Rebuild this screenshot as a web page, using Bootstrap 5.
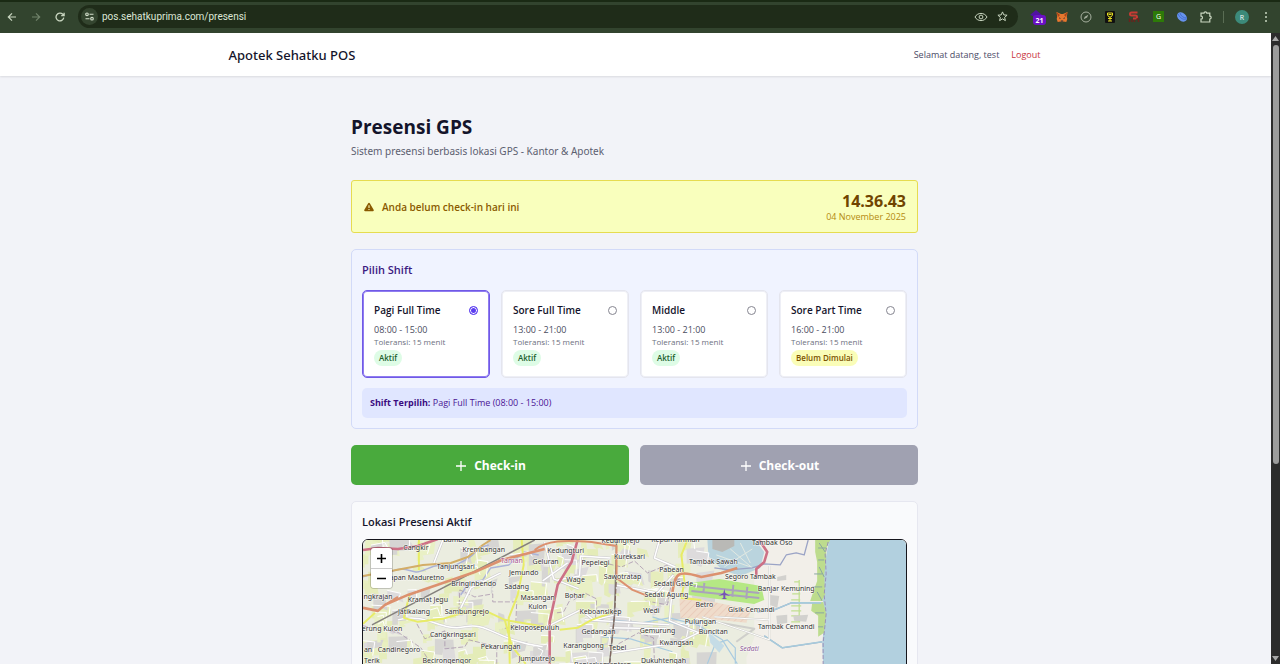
<!DOCTYPE html>
<html lang="id">
<head>
<meta charset="utf-8">
<meta name="viewport" content="width=device-width, initial-scale=1">
<title>Apotek Sehatku POS</title>
<link href="https://cdn.jsdelivr.net/npm/bootstrap@5.3.0/dist/css/bootstrap.min.css" rel="stylesheet">
<style>
  body { font-family: "Open Sans", "Noto Sans", sans-serif; font-size: 9px; line-height: 12px; background: #f2f3f8; color: #14142b; }
  h1, h2, h3, p { margin: 0; }
  .browser-bar { height: 33px; background: #32442e; box-shadow: inset 0 2px #1a2a14; color: #c9d6c0; padding-right: 2px; }
  .browser-bar button { border: 0; background: none; padding: 0; color: inherit; display: flex; width: 24px; height: 24px; align-items: center; justify-content: center; }
  .address { height: 23px; background: #1f2c19; border-radius: 12px; padding: 0 4px 0 3px; margin-left: 6px; }
  .address .site-info { width: 17px; height: 17px; border-radius: 50%; background: #34452f; }
  .address input { background: none; border: 0; outline: 0; padding: 0; color: #dde6d6; font-family: Roboto, sans-serif; font-size: 10px; min-width: 0; }
  .address .eye { width: 18px; }
  .extensions { margin-left: 8px; }
  .page-view { min-height: 0; }
  .page-body { padding-right: 2px; }
  .topbar { background: #fff; box-shadow: 0 1px 2px #0000001a; height: 43px; margin-right: -2px; padding-right: 2px; }
  .topbar-inner { max-width: 812px; }
  .brand { font-family: "Noto Sans", sans-serif; font-size: 13px; line-height: 20px; font-weight: 500; color: #14142b; }
  .welcome { color: #4b4b66; }
  .logout { color: #c8323c; text-decoration: none; }
  .content-col { max-width: 567px; padding-top: 39px; }
  .title { font-size: 19px; line-height: 24px; font-weight: 700; }
  .subtitle { font-family: "Noto Sans", sans-serif; font-size: 10px; line-height: 14px; color: #5c6070; margin-top: 5px; }
  .notice { background: #f9ffbd; border: 1px solid #e6dc50; border-radius: 3px; height: 53px; padding: 0 11px 0 12px; margin-top: 22px; color: #8a5a00; }
  .notice strong { font-size: 10px; font-weight: 600; }
  .clock { font-size: 16px; line-height: 20px; font-weight: 700; color: #704400; }
  .date { color: #b48a10; }
  .shift-panel { background: #f0f3ff; border: 1px solid #d2daf8; border-radius: 5px; padding: 10px; margin-top: 16px; height: 180px; }
  .panel-title { font-size: 11px; line-height: 20px; font-weight: 600; }
  .shift-panel .panel-title { color: #3b1a82; }
  .shift-grid { display: grid; grid-template-columns: repeat(4, 1fr); gap: 11px; margin-top: 10px; }
  .shift { background: #fff; border: 1px solid #e4e5ee; box-shadow: 0 0 0 1px #eeeff6 inset; border-radius: 5px; height: 88px; padding: 12px 10px 0 11px; cursor: pointer; }
  .shift.chosen { border-color: #7059e6; box-shadow: 0 0 0 1px #8f7cf0 inset; }
  .shift-name { font-size: 10px; line-height: 14px; font-weight: 600; }
  .shift input { appearance: none; width: 9px; height: 9px; border: 1px solid #858590; border-radius: 50%; margin: 3px 1px 0 0; background: #fff; }
  .shift input:checked { border-color: #5b3df0; background: #5b3df0; box-shadow: 0 0 0 1px #fff inset; }
  .hours { color: #4a4c60; margin-top: 7px; }
  .tolerance { font-size: 8px; color: #6c7080; }
  .pill { font-size: 8px; line-height: 12px; font-weight: 600; padding: 2px 5px; border-radius: 8px; background: #defce6; color: #20602c; margin-top: 2px; display: inline-block; }
  .pill.waiting { background: #fafdb8; color: #7a5200; }
  .chosen-line { background: #e0e6ff; border-radius: 5px; height: 30px; padding: 0 8px; margin-top: 10px; color: #4a1494; }
  .chosen-line b { color: #3a0c80; }
  .actions { display: grid; grid-template-columns: 1fr 1fr; gap: 11px; margin-top: 16px; }
  .actions .btn { height: 40px; border: 0; border-radius: 5px; font-size: 12px; font-weight: 700; color: #fff; padding: 2px 0 0 2px; background: #49aa3d; opacity: 1; }
  .actions .btn:disabled { background: #a0a1b1; }
  .map-panel { background: #f9fafc; border: 1px solid #e6e7f0; border-radius: 5px; padding: 10px; margin-top: 16px; }
  .map-box { border: 1px solid #15151c; border-radius: 6px; overflow: hidden; margin-top: 7px; height: 268px; position: relative; }
  .map-box > svg { width: 100%; height: 100%; display: block; font-family: "Noto Sans", sans-serif; }
  .zoom-ctl { position: absolute; left: 8px; top: 8px; width: 21px; border-radius: 3px; box-shadow: 0 0 0 1px #0000002e; overflow: hidden; }
  .zoom-ctl button { display: block; width: 100%; height: 20px; padding: 0; border: 0; background: #fff; color: #000; }
  .zoom-ctl button + button { border-top: 1px solid #ccc; }
  .zoom-ctl svg { display: block; margin: auto; }
  .scroll-rail { width: 9px; background: #2c2c2c; padding: 3px 1px; }
  .scroll-thumb { width: 6px; height: 67%; border-radius: 3px; background: #9c9c9c; margin-top: 3px; }
</style>
</head>
<body>
<div class="vh-100 d-flex flex-column overflow-hidden">
  <header class="browser-bar d-flex align-items-center flex-shrink-0">
    <button aria-label="Kembali"><svg width="10" height="10" viewBox="0 0 10 10" fill="none" stroke="currentColor" stroke-width="1.2"><path d="M9 5H1.5M5 1.3 1.3 5 5 8.7"/></svg></button>
    <button aria-label="Maju"><svg width="10" height="10" viewBox="0 0 10 10" fill="none" stroke="#70836a" stroke-width="1.2"><path d="M1 5h7.5M5 1.3 8.7 5 5 8.7"/></svg></button>
    <button aria-label="Muat ulang"><svg width="10" height="10" viewBox="0 0 10 10" fill="none" stroke="currentColor" stroke-width="1.3"><path d="M8.8 5.7A3.9 3.9 0 1 1 7.8 2.3L9 3.5M9.1.7v3H6.2"/></svg></button>
    <div class="address d-flex align-items-center flex-grow-1">
      <span class="site-info d-flex align-items-center justify-content-center"><svg width="9" height="9" viewBox="0 0 9 9" fill="none" stroke="#d3decb" stroke-width="1.1"><circle cx="2" cy="2.3" r="1.3"/><path d="M4.5 2.3H8.5M.5 6.7H4.5"/><circle cx="7" cy="6.7" r="1.3"/></svg></span>
      <input class="flex-grow-1 ms-1" type="text" aria-label="Alamat" value="pos.sehatkuprima.com/presensi">
      <button class="eye" aria-label="Lihat"><svg width="14" height="10" viewBox="-1 0 14 10" fill="none" stroke="currentColor"><path d="M0 5C2.500.2 9.500.2 12 5 9.500 9.800 2.500 9.800 0 5z"/><circle cx="6" cy="5" r="1.900"/></svg></button>
      <button aria-label="Tandai"><svg width="11" height="11" viewBox="0 0 11 11" fill="none" stroke="currentColor"><path d="m5.500.9 1.300 3 3.300.3-2.500 2.200.8 3.200-2.900-1.700-2.900 1.700.8-3.200L.9 4.200l3.300-.3z"/></svg></button>
    </div>
    <div class="extensions d-flex align-items-center">
      <button aria-label="Ekstensi 21"><svg width="18" height="18" viewBox="0 0 18 18"><path d="M1 7 7 2l6 5-2 1v4H4V8z" fill="#5012a0"/><rect x="4" y="7" width="13" height="10" rx="3" fill="#6a10c4"/><text x="10.500" y="15" font-size="7" font-weight="700" fill="#fff" text-anchor="middle">21</text></svg></button>
      <button aria-label="Rubah"><svg width="12" height="12" viewBox="0 0 12 12"><path d="M.5 1 5 3h2l4.500-2-.7 5 .5 2-1 3-2.800-.6L6 11.300l-1.500-.9-2.800.6-1-3 .5-2z" fill="#e8772e"/><path d="m.5 1 3.500 3-2 2zM11.500 1 8 4l2 2z" fill="#a8451a"/><path d="M3 6.300 5 7.500l-1.500.3zM9 6.300 7 7.500l1.500.3zM4.700 9.500h2.600l-.5 1.200H5.200z" fill="#27303a"/></svg></button>
      <button aria-label="Kompas"><svg width="12" height="12" viewBox="0 0 12 12" fill="none" stroke="#a6b09f"><circle cx="6" cy="6" r="5"/><path d="m3.700 8.300 1-2.500 3.600-2.100-1.200 2.800z" fill="#a6b09f" stroke="none"/></svg></button>
      <button aria-label="Robot"><svg width="10" height="12" viewBox="0 0 10 12"><rect width="10" height="12" rx="1" fill="#111"/><path d="M2.500 2h5v2l-1.500 2h-2L2.500 4zM5 6v4M3 7.500h4M3 10h4" fill="none" stroke="#e4dd21"/><path d="M3.500 3.500h3" stroke="#e4dd21"/></svg></button>
      <button aria-label="SEO"><svg width="12" height="12" viewBox="0 0 12 12"><path d="M9.500 1.500H3.500a1.500 1.500 0 0 0 0 3h4a1.500 1.500 0 0 1 0 3H5" fill="none" stroke="#c83b34" stroke-width="2"/><path d="M1.500 7.500v3.500m2.500-3v3m2.500-2v2m2-3h2v3" fill="none" stroke="#6a211c" stroke-width="1.400"/></svg></button>
      <button aria-label="G"><svg width="11" height="11" viewBox="0 0 11 11"><rect width="11" height="11" fill="#2d7a08"/><text x="5.500" y="8" font-size="7" fill="#fff" text-anchor="middle">G</text></svg></button>
      <button aria-label="Bola"><svg width="12" height="12" viewBox="0 0 12 12"><ellipse cx="6" cy="6" rx="5.500" ry="4" transform="rotate(40 6 6)" fill="#6793ec"/><path d="M2 3c2 4 5 6 8 5M4 2c1 3 3 5 7 5" fill="none" stroke="#3b64c8" stroke-width=".8"/></svg></button>
      <button aria-label="Semua ekstensi"><svg width="12" height="12" viewBox="0 0 12 12" fill="none" stroke="currentColor" stroke-width="1.200"><path d="M1 2.200h3a1.400 1.400 0 0 1 2.800 0h3v3a1.400 1.400 0 0 1 0 2.800v3H1V8.200a1.500 1.500 0 0 0 0-3z"/></svg></button>
      <svg class="mx-1" width="4" height="12"><path d="M1.500 0v12" stroke="#5a6d54"/></svg>
      <button aria-label="Profil R"><svg width="14" height="14" viewBox="0 0 14 14"><circle cx="7" cy="7" r="7" fill="#3c8a7a"/><text x="7" y="9.500" font-size="7" fill="#fff" text-anchor="middle">R</text></svg></button>
      <button aria-label="Menu"><svg width="4" height="12" fill="currentColor"><circle cx="2" cy="2" r="1"/><circle cx="2" cy="6" r="1"/><circle cx="2" cy="10" r="1"/></svg></button>
    </div>
  </header>

  <div class="page-view d-flex flex-grow-1">
    <div class="page-body flex-grow-1 overflow-hidden">
      <nav class="topbar">
        <div class="topbar-inner mx-auto h-100 d-flex align-items-center justify-content-between">
          <span class="brand">Apotek Sehatku POS</span>
          <div class="d-flex align-items-center"><span class="welcome me-2 pe-1">Selamat datang, test</span><a class="logout" href="#">Logout</a></div>
        </div>
      </nav>
      <main class="content-col mx-auto">
        <h1 class="title">Presensi GPS</h1>
        <p class="subtitle">Sistem presensi berbasis lokasi GPS - Kantor &amp; Apotek</p>

        <section class="notice d-flex align-items-center justify-content-between">
          <div class="d-flex align-items-center gap-1">
            <svg class="me-1" width="10" height="10" viewBox="0 0 11 10"><path d="M4.600.9a1 1 0 0 1 1.800 0l4.200 7.200A1 1 0 0 1 9.700 9.700H1.300A1 1 0 0 1 .4 8.100z" fill="#8a5a00"/><path d="M5.500 3v3M5.500 7.200v1.200" stroke="#f9ffbd" stroke-width="1.200"/></svg>
            <strong>Anda belum check-in hari ini</strong>
          </div>
          <div class="text-end"><div class="clock">14.36.43</div><div class="date">04 November 2025</div></div>
        </section>

        <section class="shift-panel">
          <h2 class="panel-title">Pilih Shift</h2>
          <div class="shift-grid">
            <label class="shift chosen"><span class="d-flex justify-content-between"><span class="shift-name">Pagi Full Time</span><input type="radio" name="shift" checked></span><span class="hours d-block">08:00 - 15:00</span><span class="tolerance d-block">Toleransi: 15 menit</span><span class="pill">Aktif</span></label>
            <label class="shift"><span class="d-flex justify-content-between"><span class="shift-name">Sore Full Time</span><input type="radio" name="shift"></span><span class="hours d-block">13:00 - 21:00</span><span class="tolerance d-block">Toleransi: 15 menit</span><span class="pill">Aktif</span></label>
            <label class="shift"><span class="d-flex justify-content-between"><span class="shift-name">Middle</span><input type="radio" name="shift"></span><span class="hours d-block">13:00 - 21:00</span><span class="tolerance d-block">Toleransi: 15 menit</span><span class="pill">Aktif</span></label>
            <label class="shift"><span class="d-flex justify-content-between"><span class="shift-name">Sore Part Time</span><input type="radio" name="shift"></span><span class="hours d-block">16:00 - 21:00</span><span class="tolerance d-block">Toleransi: 15 menit</span><span class="pill waiting">Belum Dimulai</span></label>
          </div>
          <div class="chosen-line d-flex align-items-center"><span><b>Shift Terpilih:</b> Pagi Full Time (08:00 - 15:00)</span></div>
        </section>

        <div class="actions">
          <button class="btn d-flex align-items-center justify-content-center gap-2"><svg width="10" height="10" stroke="#fff" stroke-width="1.300"><path d="M5 0v10M0 5h10"/></svg>Check-in</button>
          <button class="btn d-flex align-items-center justify-content-center gap-2" disabled><svg width="10" height="10" stroke="#fff" stroke-width="1.300"><path d="M5 0v10M0 5h10"/></svg>Check-out</button>
        </div>

        <section class="map-panel">
          <h2 class="panel-title">Lokasi Presensi Aktif</h2>
          <div class="map-box">
            <svg viewBox="0 0 544 268" preserveAspectRatio="xMinYMin slice" fill="none" stroke-linejoin="round">
              <defs>
                <pattern id="hatch" width="5" height="5" patternUnits="userSpaceOnUse" patternTransform="rotate(45)"><rect width="5" height="5" fill="#efdccb"/><path d="M0 0v5" stroke="#e6bfae"/></pattern>
              </defs>
              <rect width="544" height="268" fill="#ebede0"/>
              <g id="parcels"></g>
              <!-- coastal flats, ponds and the airport -->
              <path d="M392 0h75l-4 38-3 25 3 50-2 155H392l-8-150 8-20z" fill="#f2efe9"/>
              <path d="M345 0h48l9 12-4 16-20 8-18-6-14-14z" fill="#bad4de"/>
              <path d="M350 0h22v6l-12 6-10-3z" fill="#b9b9b6"/>
              <path d="m354 15 40 14M368 9l22 19M378 3l10 20M362 27l28-18" stroke="#e2e9e2"/>
              <path d="m317 59 10-2 62 13-5 13-40-4-26-1z" fill="url(#hatch)"/>
              <path d="m327 43 30-4 42 7 3 14-10 4-66-9z" fill="#b5e884"/>
              <path d="m331 46 66 7M329 51l68 7M342 43l-1 10M371 45l-1 12M385 47l-1 12" stroke="#aaa3bb" stroke-width="2"/>
              <path d="m249 80 30 3 28-5 28 7 25 15 15 24M290 77l25 8 33-4M240 97l28 2 42 13M345 124l8-20 12-4 8 8v16" stroke="#a9cbe0" stroke-width="1.200"/>
              <path d="m346 92 16 14-5 7-9-10z" fill="#c5dce6"/>
              <path d="M467 0h77v268h-82l-2-80 1-64-1-20 3-28-3-20 2-30z" fill="#b2d0df"/>
              <path d="M453 0h15l-4 9v12l-2 13 1 20-3 7h-12l3-9 4-11V22l-2-10zM450 63l11-1 3 12-2 19-6 4v-21l-7-5z" fill="#bddc8d"/>
              <path d="M456 8h8m-8 12h6m-10 14h8m-10 13h10m-7 26h9m-6 14h5M457 3l6 9m-6 15 5 10m-7 15 5 9" stroke="#8aa7a1" stroke-width="1"/>
              <path d="m466 2-3 12 1 20-2 21 2 19-3 29v60" stroke="#9a91b8" stroke-dasharray="4 2"/>
              <path d="M432 42h5m-7 6h7m-7 6h8m-9 6h9m-9 6h10m-10 5h10m-10 5h9m-9 6h9M437 40v42" stroke="#c1df91" stroke-width="1.300"/>
              <path d="m415 37 9-2v5l-9 1zm-7 18 9 1-2 12-7-3zm23 21 15-1-2 7-12-1zm-17 0 11-1v8l-10 2z" fill="#d2d1ce"/>
              <path d="m395 72 17-2 17-7h30M402 96l18 12 40-6M352 28l15 2 23-2 12-4 16 1 6-10 10-2 8 2 4-15" stroke="#9ba4c6" stroke-width="1.300"/>
              <path d="m395 72 17-2 17-7h30M402 96l18 12 40-6" stroke="#a7cbdb" stroke-width="1.600"/>
              <path d="M407 26v74l-25-9-42-14M407 80l-55-3M352 82l40 7-18 13" stroke="#cfcfcb" stroke-width="2"/>
              <path d="M407 26v74l-25-9-42-14M407 80l-55-3" stroke="#fff"/>
              <!-- waterways and boundaries -->
              <path d="M0 37c15-7 17 1 28-5s18-1 25 0 18-9 26-6 18-2 27-8 6-10 20-13M98 55l8-12 14-3 8-12 18-3 15-13 15 3" stroke="#abb3d8" stroke-width="1.500"/>
              <path d="m96 72 1-22 15 7 18-3v8h24l-1 24-13 3M54 84l8 15 20-8v18l20-2 4-7 28 7v17M211 60l11-7 12 6-1 19 14 4M246 24l13 3 13-6 13 12 20-8 8 14M283 61l22 4 4-22 10-5M256 104l20-11 15 5 1 24M210 55l-9 17-7 1M0 86l36 7 22 15 10 16" stroke="#a996ad" stroke-width=".8" stroke-dasharray="5 2"/>
              <!-- local, secondary and main roads -->
              <g id="lanes" stroke="#fff"></g>
              <path d="M35 80c28-8 43 12 67 7s30 13 78 20M80 0l-9 23M205 23l-25 18M182 2l9 37 25 10M195 40l22-4 1-20 30 2M182 88l36-18 13 10 22-5M253 45l42 8 16-18M222 80l85 5M247 88l57 1M297 0l-5 18 21 9M309 58l-2 23 30 12M250 113l65-10 25-12M98 68l10-20 30-15" stroke="#cbc9ce" stroke-width="2.600"/>
              <path d="M35 80c28-8 43 12 67 7s30 13 78 20M80 0l-9 23M205 23l-25 18M182 2l9 37 25 10M195 40l22-4 1-20 30 2M182 88l36-18 13 10 22-5M253 45l42 8 16-18M222 80l85 5M247 88l57 1M297 0l-5 18 21 9M309 58l-2 23 30 12M250 113l65-10 25-12M98 68l10-20 30-15" stroke="#fff" stroke-width="1.500"/>
              <path d="m0 84 12-11M47 53l-6 25 14 4 25-3 20-6 25-1 17 8 40 7M159 0l2 25-6 30-9 23 1 46m-5-44 7 26 14 18M56 0v30M197 90l18-2 14-8 20-7M325 0l-6 15 3 27-3 16 20 2" stroke="#e8ec67" stroke-width="2"/>
              <path d="M0 36l28-5 32-6 28-2 17-6 15-12 8-5" stroke="#d3ad67" stroke-width="2"/>
              <path d="m9 85 163-85M254 0l-2 75-5 49-2 40" stroke="#86827e" stroke-width="1.500"/>
              <path d="M0 10l15-2 20 1 20-3 20-7M215 0l-6 22-14 23-8 37v42l3 50M397 0l8 12-3 10-8 7v9" stroke="#cd7186" stroke-width="2.600"/>
              <path d="m0 68 15 3 7-6 23-10 67-23 27-12 43-11M310 52c3-20 6-22 29-15l20-4 16-5" stroke="#dc916f" stroke-width="2.600"/>
              <path d="M172 10c12-10 30-10 57-8l25 4v32l16 12 15 6M22 65l13-8" stroke="#dc916f" stroke-width="2"/>
              <path d="M254 35l-2 40-5 50" stroke="#80655e" stroke-width="1.200" stroke-dasharray="5 2"/>
              <path d="m362 49 1 4 5 3-5-1v3l2 1-3 0-3 0 2-1v-3l-5 1 5-3z" fill="#7653b5"/>
              <g id="places" font-size="7" fill="#30302f" stroke="#ffffffb8" stroke-width="1.200" paint-order="stroke" text-anchor="middle"></g>
            </svg>
            <div class="zoom-ctl">
              <button aria-label="Perbesar"><svg width="9" height="9" stroke="#000" stroke-width="1.600"><path d="M4.500 0v9M0 4.500h9"/></svg></button>
              <button aria-label="Perkecil"><svg width="9" height="9" stroke="#000" stroke-width="1.600"><path d="M0 4.500h9"/></svg></button>
            </div>
          </div>
        </section>
      </main>
    </div>
    <div class="scroll-rail d-flex flex-column align-items-center flex-shrink-0">
      <svg width="7" height="6" fill="#a8a8a8"><path d="M3.500 0 7 5H0z"/></svg>
      <div class="scroll-thumb"></div>
      <svg class="mt-auto" width="7" height="5" fill="#a8a8a8"><path d="M0 0h7L3.500 5z"/></svg>
    </div>
  </div>
</div>
<script src="https://cdn.jsdelivr.net/npm/bootstrap@5.3.0/dist/js/bootstrap.bundle.min.js"></script>
<script>
  // Place names: label, centre x, baseline y
  const places = [["Cangkir",53,10],["Krembangan",121,12],["Bambe",92,2],["Tanjungsari",93,29],["apan Maduretno",54,40],["Bringinbendo",111,46],["Jemundo",161,35],["Sadang",154,49],["ngkrajan",15,59],["Kramat Jegu",65,62],["Masangan",175,60],["Kulon",175,69],["Jatikalang",51,74],["Sambungrejo",104,74],["erung Kulon",19,91],["Cangkringsari",90,97],["Keloposepuluh",172,90],["Pekarungan",138,109],["Candinegoro",36,112],["an",5,112],["Terik",9,123],["Becirongengor",84,123],["Jumputrejo",174,121],
    ["Kedungturi",203,13],["Geluran",183,24],["Pepelegi",233,25],["Kureksari",267,19],["Kedungrejo",258,3],["Kepuh Kiriman",313,2],["Wage",213,42],["Bohar",212,58],["Sawotratap",260,39],["Pabean",309,32],["Tambak Sawah",351,24],["Sedati Gede",311,46],["Sedati Agung",304,57],["Betro",342,67],["Wedi",289,73],["Keboansikep",238,74],["Pulungan",338,84],["Buncitan",351,94],["Gedangan",236,94],["Gemurung",295,93],["Kwangsan",314,105],["Karangbong",221,108],["Tebel",255,110],["Dukuhtengah",301,123],["Banjarkemantren",240,127],
    ["Tambak Oso",410,5],["Segoro Tambak",388,39],["Banjar Kemuning",424,51],["Gisik Cemandi",389,72],["Tambak Cemandi",424,89]];
  document.getElementById("places").innerHTML =
    places.map(([n, x, y]) => `<text x="${x}" y="${y}">${n}</text>`).join("") +
    '<text x="149" y="23" fill="#a5508a">Taman</text><text x="387" y="111" fill="#8c5a97" font-style="italic">Sedati</text>';

  // Field and built-up parcels, laid down from a fixed seed
  let seed = 41;
  const rnd = () => (seed = (seed * 16807) % 2147483647) / 2147483647;
  let parcels = "", lanes = "";
  const tints = ["#e8efc0", "#e6edbc", "#d6d5d3", "#e4ecb8", "#dddbdc", "#e9f0c5"];
  for (let i = 0; i < 420; i++) {
    const x = rnd() * 345 - 8, y = rnd() * 275 - 8, w = 5 + rnd() * 15, h = 4 + rnd() * 12, s = rnd() * 6 - 3;
    parcels += `<path d="M${x} ${y}l${w} ${s} ${s} ${h} ${-w * .6} ${-s} ${-s} ${h * .3} ${-w * .4} ${-s}z" fill="${tints[Math.floor(rnd() * tints.length)]}"/>`;
    if (i % 3 === 0) lanes += `<path d="M${x} ${y}l${w} ${s} ${-s} ${h}"/>`;
  }
  document.getElementById("parcels").innerHTML = parcels;
  document.getElementById("lanes").innerHTML = lanes;
</script>
</body>
</html>
